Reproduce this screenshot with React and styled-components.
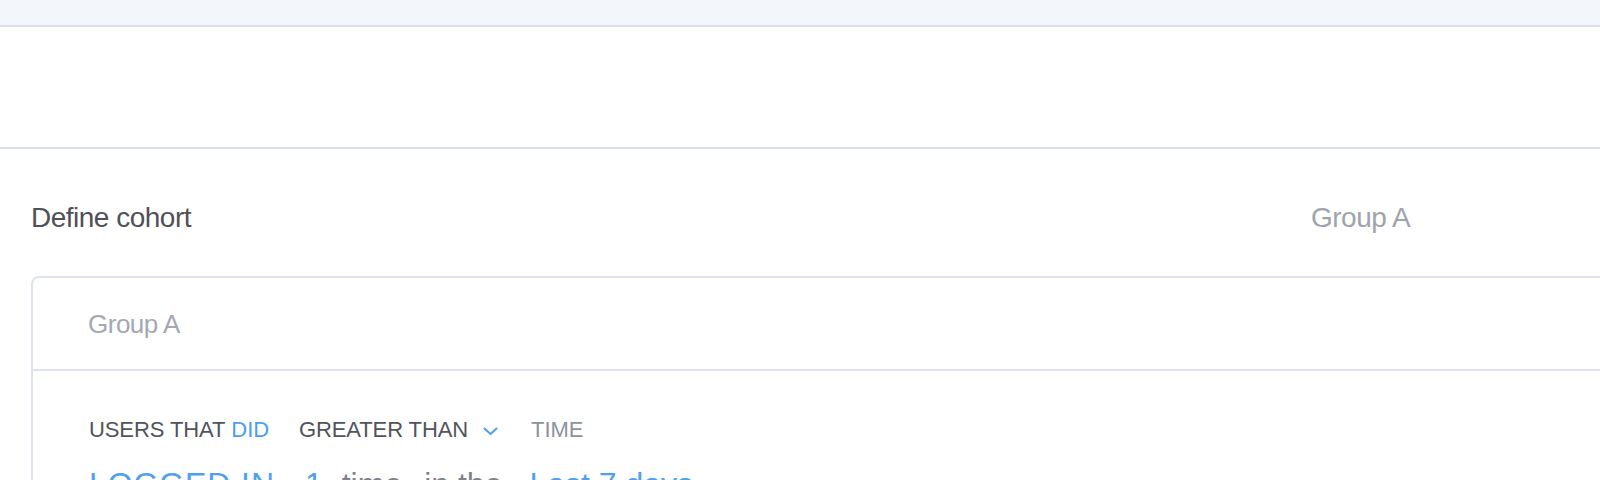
import React from 'react';
import styled, { createGlobalStyle } from 'styled-components';

const GlobalStyle = createGlobalStyle`
  html, body {
    margin: 0;
    padding: 0;
    height: 100%;
    overflow: hidden;
    background: #fff;
    font-family: "Liberation Sans", Arial, Helvetica, sans-serif;
  }
`;

const TopBar = styled.div`
  height: 25px;
  background-color: #f3f6fa;
  border-bottom: 2px solid #d9deea;
`;

const Banner = styled.div`
  height: 120px;
  border-bottom: 2px solid #dadfec;
`;

const Content = styled.div`
  padding: 53px 0 0 31px;
`;

const TitleRow = styled.div`
  display: grid;
  grid-template-columns: 1fr 289px;
  align-items: center;
  font-size: 28px;
  line-height: 32px;
  letter-spacing: -0.5px;
  .title {
    color: #505057;
  }
  .group {
    color: #9ea3ae;
  }
`;

const Card = styled.div`
  margin-top: 42px;
  border: 2px solid #dfe3ee;
  border-right: none;
  border-bottom: none;
  border-radius: 8px 0 0 0;
  min-height: 400px;
`;

const CardHeader = styled.div`
  height: 91px;
  display: flex;
  align-items: center;
  padding-left: 55px;
  border-bottom: 2px solid #dfe3ee;
  font-size: 26px;
  line-height: 30px;
  letter-spacing: -0.5px;
  color: #a4a8b2;
`;

const CardBody = styled.div`
  padding: 46px 0 0 56px;
`;

const RuleRow = styled.div`
  display: flex;
  align-items: center;
  font-size: 22px;
  line-height: 26px;
  letter-spacing: -0.1px;
  text-transform: uppercase;
`;

const Label = styled.span`
  margin-left: ${(p) => p.$gap || 0}px;
  color: ${(p) => (p.$muted ? '#8d929c' : '#50545d')};
  display: inline-flex;
  align-items: center;
  .hl {
    color: #4a9ff0;
  }
`;

const Chevron = styled.svg`
  margin-left: 15px;
  margin-top: 2px;
  width: 15px;
  height: 9px;
`;

const SentenceRow = styled.div`
  display: flex;
  margin-top: 22px;
  font-size: 32px;
  line-height: 38px;
`;

const Token = styled.span`
  margin-left: ${(p) => p.$gap || 0}px;
  letter-spacing: ${(p) => p.$spread || 0}px;
  color: ${(p) => (p.$blue ? '#519fee' : '#7f838c')};
`;

const App = () => (
  <>
    <GlobalStyle />
    <TopBar />
    <Banner />
    <Content>
      <TitleRow>
        <span className="title">Define cohort</span>
        <span className="group">Group A</span>
      </TitleRow>
      <Card>
        <CardHeader>Group A</CardHeader>
        <CardBody>
          <RuleRow>
            <Label>
              Users that&nbsp;<span className="hl">did</span>
            </Label>
            <Label $gap={30}>
              Greater than
              <Chevron viewBox="0 0 15 9">
                <polyline
                  points="1.5,1.5 7.5,7 13.5,1.5"
                  fill="none"
                  stroke="#4a9ff0"
                  strokeWidth="2"
                  strokeLinecap="round"
                  strokeLinejoin="round"
                />
              </Chevron>
            </Label>
            <Label $gap={33} $muted>
              Time
            </Label>
          </RuleRow>
          <SentenceRow>
            <Token $blue $spread={0.9}>LOGGED IN</Token>
            <Token $blue $gap={30}>1</Token>
            <Token $gap={19}>time</Token>
            <Token $gap={22}>in the</Token>
            <Token $blue $gap={27}>Last 7 days</Token>
          </SentenceRow>
        </CardBody>
      </Card>
    </Content>
  </>
);

export default App;
